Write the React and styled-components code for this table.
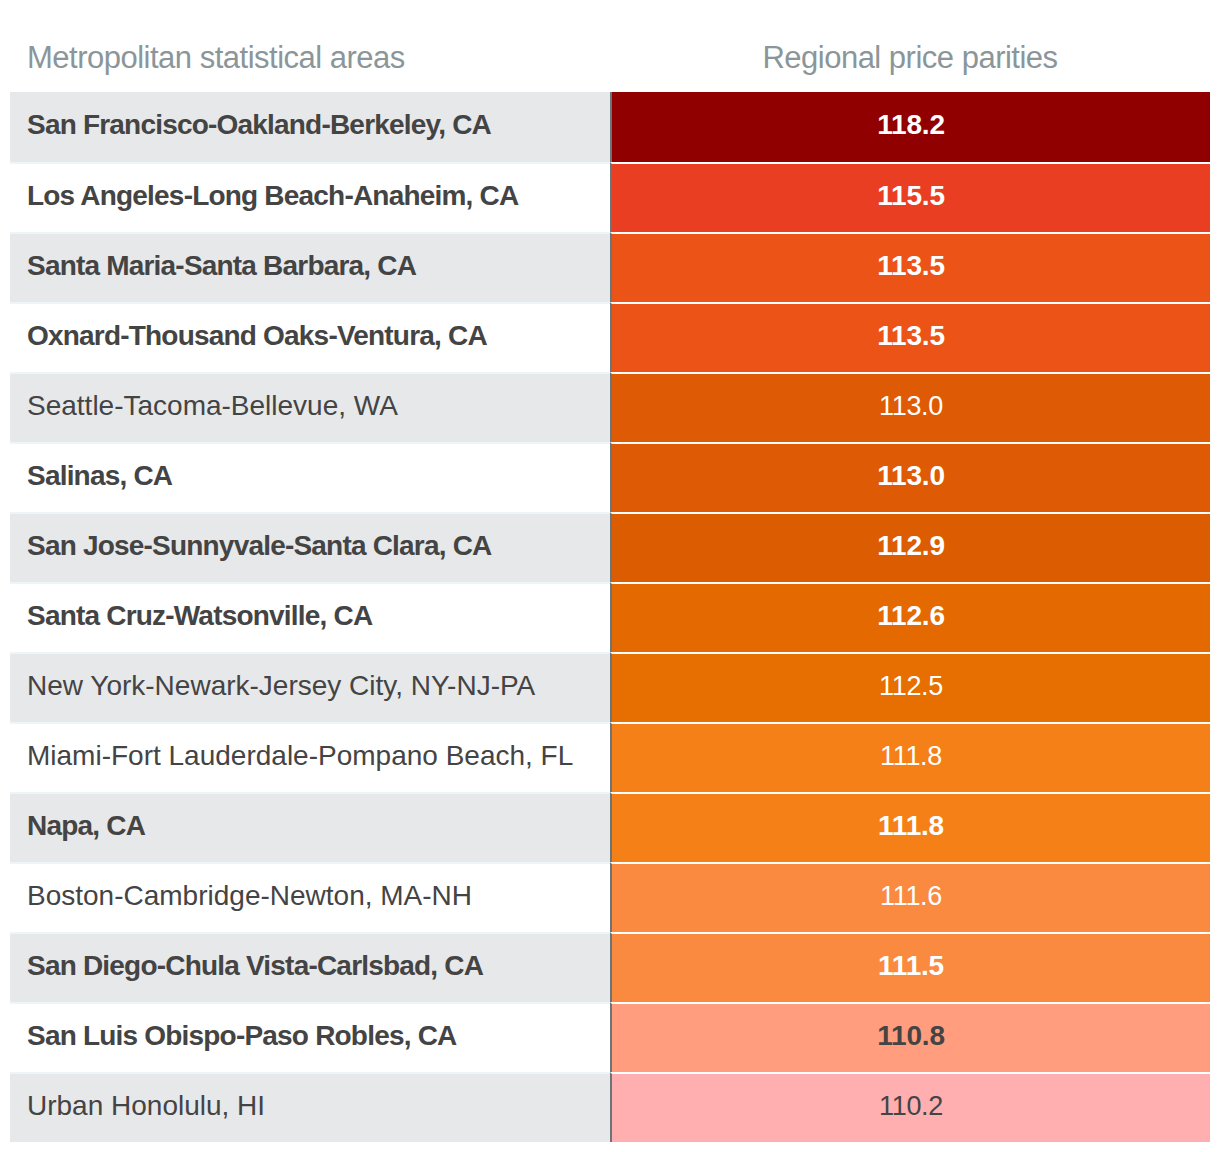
import React from "react";
import styled, { createGlobalStyle } from "styled-components";

const rows = [
  { name: "San Francisco-Oakland-Berkeley, CA", value: "118.2", color: "#910000", bold: true },
  { name: "Los Angeles-Long Beach-Anaheim, CA", value: "115.5", color: "#ea3e23", bold: true },
  { name: "Santa Maria-Santa Barbara, CA", value: "113.5", color: "#ec5317", bold: true },
  { name: "Oxnard-Thousand Oaks-Ventura, CA", value: "113.5", color: "#ec5317", bold: true },
  { name: "Seattle-Tacoma-Bellevue, WA", value: "113.0", color: "#df5a04" },
  { name: "Salinas, CA", value: "113.0", color: "#df5a04", bold: true },
  { name: "San Jose-Sunnyvale-Santa Clara, CA", value: "112.9", color: "#dc5c02", bold: true },
  { name: "Santa Cruz-Watsonville, CA", value: "112.6", color: "#e46900", bold: true },
  { name: "New York-Newark-Jersey City, NY-NJ-PA", value: "112.5", color: "#e76e00" },
  { name: "Miami-Fort Lauderdale-Pompano Beach, FL", value: "111.8", color: "#f48017" },
  { name: "Napa, CA", value: "111.8", color: "#f48017", bold: true },
  { name: "Boston-Cambridge-Newton, MA-NH", value: "111.6", color: "#f98a40" },
  { name: "San Diego-Chula Vista-Carlsbad, CA", value: "111.5", color: "#f98a40", bold: true },
  { name: "San Luis Obispo-Paso Robles, CA", value: "110.8", color: "#ff9d7e", bold: true, dark: true },
  { name: "Urban Honolulu, HI", value: "110.2", color: "#ffafaf", dark: true },
];

const GlobalStyle = createGlobalStyle`
  body {
    margin: 0;
    background: #ffffff;
    font-family: "Liberation Sans", Arial, sans-serif;
  }
`;

const Table = styled.div`
  padding: 30px 10px 0;
  width: 1200px;
`;

const HeaderRow = styled.div`
  display: grid;
  grid-template-columns: 600px 600px;
  height: 62px;
`;

const HeaderCell = styled.div`
  color: #8a9699;
  font-size: 31px;
  letter-spacing: -0.5px;
  line-height: 56px;
  padding-left: ${(p) => (p.center ? "0" : "17px")};
  text-align: ${(p) => (p.center ? "center" : "left")};
`;

const Row = styled.div`
  display: grid;
  grid-template-columns: 600px 600px;
  height: 70px;
`;

const NameCell = styled.div`
  box-sizing: border-box;
  background: ${(p) => (p.shaded ? "#e7e8ea" : "#ffffff")};
  border-top: ${(p) => (p.divided ? "2px solid #edf5f9" : "none")};
  color: #444444;
  font-size: 28px;
  font-weight: ${(p) => (p.bold ? 700 : 400)};
  letter-spacing: ${(p) => (p.bold ? "-0.8px" : "0")};
  display: flex;
  align-items: center;
  padding: 0 0 4px 17px;
`;

const ValueCell = styled.div`
  box-sizing: border-box;
  background: ${(p) => p.color};
  border-left: 2px solid #6d7477;
  border-top: ${(p) => (p.divided ? "2px solid #ffffff" : "none")};
  color: ${(p) => (p.dark ? "#444444" : "#ffffff")};
  font-size: ${(p) => (p.bold ? "28px" : "27px")};
  font-weight: ${(p) => (p.bold ? 700 : 400)};
  letter-spacing: ${(p) => (p.bold ? "-0.2px" : "-0.3px")};
  display: flex;
  align-items: center;
  justify-content: center;
  padding-bottom: 4px;
`;

export default function App() {
  return (
    <>
      <GlobalStyle />
      <Table>
        <HeaderRow>
          <HeaderCell>Metropolitan statistical areas</HeaderCell>
          <HeaderCell center>Regional price parities</HeaderCell>
        </HeaderRow>
        {rows.map((r, i) => (
          <Row key={r.name}>
            <NameCell shaded={i % 2 === 0} bold={r.bold} divided={i > 0}>
              {r.name}
            </NameCell>
            <ValueCell color={r.color} bold={r.bold} dark={r.dark} divided={i > 0}>
              {r.value}
            </ValueCell>
          </Row>
        ))}
      </Table>
    </>
  );
}
